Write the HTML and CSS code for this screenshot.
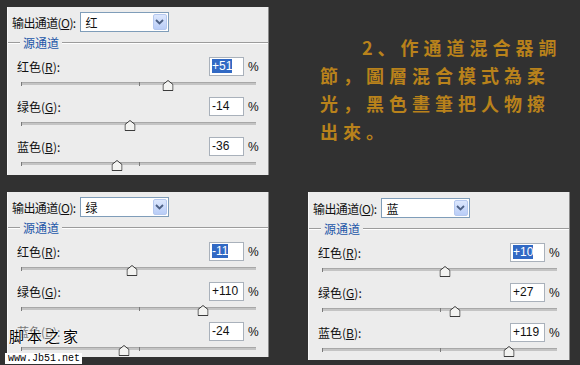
FILE: index.html
```html
<!DOCTYPE html>
<html lang="zh-CN">
  <head>
    <meta charset="UTF-8" />
    <meta name="viewport" content="width=device-width, initial-scale=1.0" />
    <title>通道混合器</title>
    <link rel="stylesheet" href="styles.css">
  </head>
  <body>
    <div class="sheet">
      <!-- 红 output -->
      <div class="panel">
        <div class="out-row">
          <span class="out-label">输出通道(<u>O</u>):</span>
          <div class="select">
            <span>红</span>
            <span class="drop"><svg width="9" height="6" viewBox="0 0 9 6"><path d="M1 1l3.5 3.5L8 1" fill="none" stroke="#4d6185" stroke-width="1.8"/></svg></span>
          </div>
        </div>
        <div class="legend-line"><span class="legend">源通道</span></div>
        <div class="channel">
          <div class="ch-head"><span class="ch-label">红色(<u>R</u>):</span><span class="field"><span class="hl">+51</span></span><span class="pct">%</span></div>
          <div class="track"><i class="tick"></i><i class="tick mid"></i><svg class="thumb" style="left: 62.75%" width="11" height="11" viewBox="0 0 11 11"><polygon points="0.5,4.5 5.5,0.5 10.5,4.5 10.5,10.5 0.5,10.5"/></svg></div>
        </div>
        <div class="channel">
          <div class="ch-head"><span class="ch-label">绿色(<u>G</u>):</span><span class="field">-14</span><span class="pct">%</span></div>
          <div class="track"><i class="tick"></i><svg class="thumb" style="left: 46.5%" width="11" height="11" viewBox="0 0 11 11"><polygon points="0.5,4.5 5.5,0.5 10.5,4.5 10.5,10.5 0.5,10.5"/></svg></div>
        </div>
        <div class="channel">
          <div class="ch-head"><span class="ch-label">蓝色(<u>B</u>):</span><span class="field">-36</span><span class="pct">%</span></div>
          <div class="track"><i class="tick"></i><i class="tick mid"></i><svg class="thumb" style="left: 41%" width="11" height="11" viewBox="0 0 11 11"><polygon points="0.5,4.5 5.5,0.5 10.5,4.5 10.5,10.5 0.5,10.5"/></svg></div>
        </div>
      </div>

      <div class="note">
        2、作通道混合器調<br>
        節，圖層混合模式為柔<br>
        光，黑色畫筆把人物擦<br>
        出來。
      </div>

      <!-- 绿 output -->
      <div class="panel short">
        <div class="out-row">
          <span class="out-label">输出通道(<u>O</u>):</span>
          <div class="select">
            <span>绿</span>
            <span class="drop"><svg width="9" height="6" viewBox="0 0 9 6"><path d="M1 1l3.5 3.5L8 1" fill="none" stroke="#4d6185" stroke-width="1.8"/></svg></span>
          </div>
        </div>
        <div class="legend-line"><span class="legend">源通道</span></div>
        <div class="channel">
          <div class="ch-head"><span class="ch-label">红色(<u>R</u>):</span><span class="field"><span class="hl">-11</span></span><span class="pct">%</span></div>
          <div class="track"><i class="tick"></i><svg class="thumb" style="left: 47.25%" width="11" height="11" viewBox="0 0 11 11"><polygon points="0.5,4.5 5.5,0.5 10.5,4.5 10.5,10.5 0.5,10.5"/></svg></div>
        </div>
        <div class="channel">
          <div class="ch-head"><span class="ch-label">绿色(<u>G</u>):</span><span class="field">+110</span><span class="pct">%</span></div>
          <div class="track"><i class="tick"></i><i class="tick mid"></i><svg class="thumb" style="left: 77.5%" width="11" height="11" viewBox="0 0 11 11"><polygon points="0.5,4.5 5.5,0.5 10.5,4.5 10.5,10.5 0.5,10.5"/></svg></div>
        </div>
        <div class="channel">
          <div class="ch-head"><span class="ch-label hidden-label">蓝色(<u>B</u>):</span><span class="field">-24</span><span class="pct">%</span></div>
          <div class="track"><i class="tick"></i><i class="tick mid"></i><svg class="thumb" style="left: 44%" width="11" height="11" viewBox="0 0 11 11"><polygon points="0.5,4.5 5.5,0.5 10.5,4.5 10.5,10.5 0.5,10.5"/></svg></div>
        </div>
        <div class="watermark">
          <div class="wm-cn">脚本之家</div>
          <div class="wm-url">www.Jb51.net</div>
        </div>
      </div>

      <!-- 蓝 output -->
      <div class="panel wide">
        <div class="out-row">
          <span class="out-label">输出通道(<u>O</u>):</span>
          <div class="select">
            <span>蓝</span>
            <span class="drop"><svg width="9" height="6" viewBox="0 0 9 6"><path d="M1 1l3.5 3.5L8 1" fill="none" stroke="#4d6185" stroke-width="1.8"/></svg></span>
          </div>
        </div>
        <div class="legend-line"><span class="legend">源通道</span></div>
        <div class="channel">
          <div class="ch-head"><span class="ch-label">红色(<u>R</u>):</span><span class="field"><span class="hl">+10</span></span><span class="pct">%</span></div>
          <div class="track"><i class="tick"></i><svg class="thumb" style="left: 52.5%" width="11" height="11" viewBox="0 0 11 11"><polygon points="0.5,4.5 5.5,0.5 10.5,4.5 10.5,10.5 0.5,10.5"/></svg></div>
        </div>
        <div class="channel">
          <div class="ch-head"><span class="ch-label">绿色(<u>G</u>):</span><span class="field">+27</span><span class="pct">%</span></div>
          <div class="track"><i class="tick"></i><i class="tick mid"></i><svg class="thumb" style="left: 56.75%" width="11" height="11" viewBox="0 0 11 11"><polygon points="0.5,4.5 5.5,0.5 10.5,4.5 10.5,10.5 0.5,10.5"/></svg></div>
        </div>
        <div class="channel">
          <div class="ch-head"><span class="ch-label">蓝色(<u>B</u>):</span><span class="field">+119</span><span class="pct">%</span></div>
          <div class="track"><i class="tick"></i><i class="tick mid"></i><svg class="thumb" style="left: 79.75%" width="11" height="11" viewBox="0 0 11 11"><polygon points="0.5,4.5 5.5,0.5 10.5,4.5 10.5,10.5 0.5,10.5"/></svg></div>
        </div>
      </div>
    </div>
  </body>
</html>
```

FILE: styles.css
```css
body {
  margin: 0;
  background-color: #313131;
  font-family: "Noto Sans CJK SC", "Liberation Sans", sans-serif;
  font-size: 12px;
  color: #111;
}

.sheet {
  width: 580px;
  height: 365px;
  box-sizing: border-box;
  padding: 7px;
  display: grid;
  grid-template-columns: 262px 262px;
  grid-template-rows: 168px 168px;
  column-gap: 39px;
  row-gap: 17px;
  align-items: start;
  overflow: hidden;
}

/* Dialog panels */
.panel {
  position: relative;
  height: 168px;
  box-sizing: border-box;
  padding-top: 5px;
  background-color: #ececec;
  border-right: 1px solid #8a8a8a;
  border-left: 1px solid #f8f8f8;
}

.panel.short {
  height: 165px;
}

.panel.wide {
  padding-top: 6px;
}

.out-row {
  display: flex;
  align-items: center;
  gap: 4px;
  padding-left: 4px;
  height: 20px;
}

.out-label {
  white-space: nowrap;
  letter-spacing: -0.6px;
}

.select {
  width: 89px;
  height: 20px;
  box-sizing: border-box;
  border: 1px solid #7f9db9;
  background: #fff;
  display: flex;
  align-items: center;
  justify-content: space-between;
  padding-left: 5px;
}

.drop {
  width: 14px;
  height: 16px;
  margin-right: 1px;
  background: linear-gradient(#dce7fd, #b9cdf7);
  border: 1px solid #b5c8ef;
  border-radius: 2px;
  box-sizing: border-box;
  display: flex;
  align-items: center;
  justify-content: center;
}

/* Group box line with legend */
.legend-line {
  display: flex;
  align-items: center;
  height: 12px;
  margin-top: 5px;
}

.legend-line::before,
.legend-line::after {
  content: "";
  height: 1px;
  background: #9c9c9c;
  border-bottom: 1px solid #fff;
}

.legend-line::before {
  width: 12px;
}

.legend-line::after {
  flex: 1;
}

.legend {
  color: #2356a8;
  padding: 0 3px;
  line-height: 12px;
}

/* Channel rows */
.channel {
  margin-top: 8px;
}

.channel + .channel {
  margin-top: 12px;
}

.ch-head {
  display: flex;
  align-items: center;
  height: 19px;
  padding: 0 10px 0 9px;
}

.ch-label {
  flex: 1;
}

/* label sitting under the watermark, barely visible */
.hidden-label {
  color: #777;
}

.field {
  width: 35px;
  height: 19px;
  box-sizing: border-box;
  border: 1px solid #a9b1bb;
  background: #fff;
  padding-left: 2px;
  font-family: "Liberation Sans", sans-serif;
  font-size: 12px;
  line-height: 17px;
}

.hl {
  background: #3169c4;
  color: #fff;
}

.pct {
  width: 10px;
  margin-left: 4px;
  font-family: "Liberation Sans", sans-serif;
}

.track {
  position: relative;
  height: 2px;
  margin: 6px 12px 0 13px;
  background: #c4c4c4;
  border-top: 1px solid #a8a8a8;
}

.tick {
  position: absolute;
  left: 0;
  top: -1px;
  width: 1px;
  height: 4px;
  background: #7a7a7a;
}

.tick.mid {
  left: 50%;
}

.thumb {
  position: absolute;
  top: -3px;
  transform: translateX(-50%);
}

.thumb polygon {
  fill: #f3f3f1;
  stroke: #3b3b3b;
  stroke-width: 1;
}

/* Gold caption */
.note {
  margin: 26px 0 0 12px;
  color: #b9821b;
  font-family: "Noto Sans CJK TC", sans-serif;
  font-weight: 700;
  font-size: 18px;
  line-height: 28px;
  letter-spacing: 5px;
  white-space: nowrap;
  text-indent: 42px;
}

/* Site watermark */
.watermark {
  position: absolute;
  left: -3px;
  top: 133px;
}

.wm-cn {
  padding-left: 4px;
  font-size: 15px;
  line-height: 22px;
  letter-spacing: 3px;
  color: #000;
  text-shadow: 0 0 2px #fff, 0 0 2px #fff, 0 0 2px #fff;
}

.wm-url {
  display: inline-block;
  background: #fff;
  padding: 0 2px 0 3px;
  font-family: "Liberation Mono", monospace;
  font-size: 10px;
  line-height: 11px;
  color: #000;
}
```
